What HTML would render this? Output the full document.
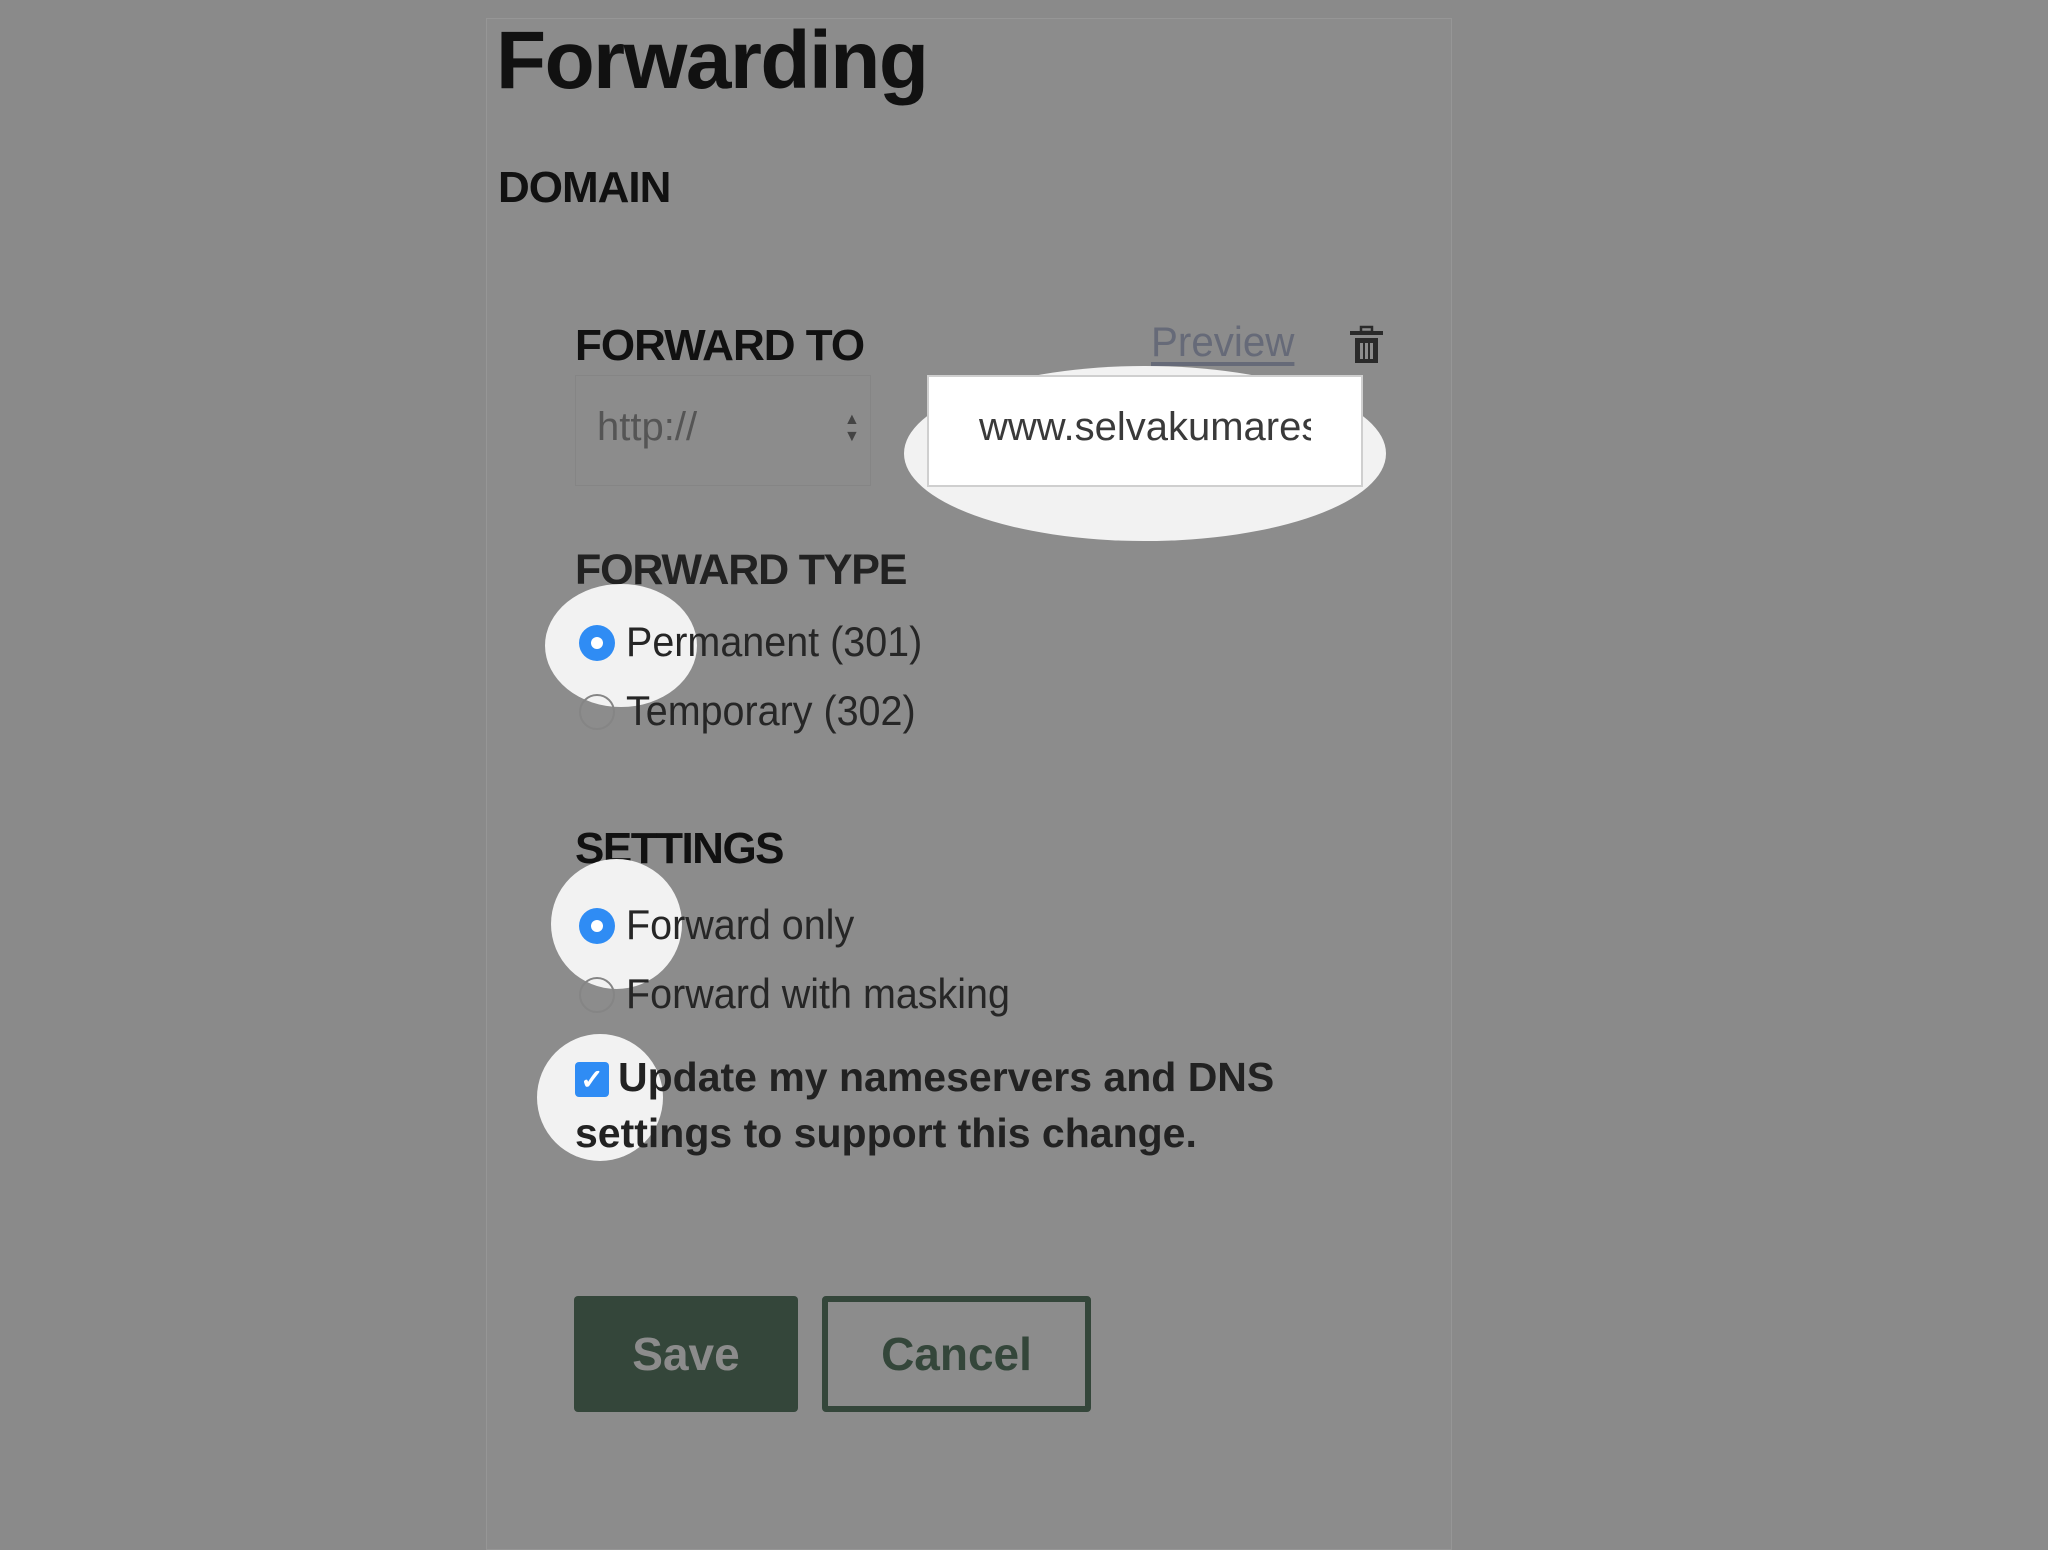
<!DOCTYPE html>
<html><head><meta charset="utf-8"><style>
html,body{margin:0;padding:0;width:2048px;height:1536px;background:#8a8a8a;overflow:hidden;font-family:"Liberation Sans",sans-serif}
.panel{position:absolute;left:486px;top:18px;width:964px;height:1530px;background:#8c8c8c;border:1px solid #969696;}
.a{position:absolute;white-space:nowrap}
.h{font-weight:bold;color:#111;}
.lbl{color:#262626;font-size:42px;transform:scaleX(0.94);transform-origin:left center}
.spot{position:absolute;background:#f2f2f2;border-radius:50%}
.radio{position:absolute;width:36px;height:36px;border-radius:50%;box-sizing:border-box}
.on{background:#2f8cf4}
.on::after{content:"";position:absolute;left:12px;top:12px;width:12px;height:12px;border-radius:50%;background:#fff}
.off{border:2px solid #858585}
</style></head><body>
<div class="panel"></div>
<div class="a h" style="left:496px;top:14px;font-size:82px;letter-spacing:-1.5px">Forwarding</div>
<div class="a h" style="left:498px;top:163px;font-size:44px;letter-spacing:-1px">DOMAIN</div>
<div class="a h" style="left:575px;top:321px;font-size:44px;letter-spacing:-1px">FORWARD TO</div>
<div class="a" style="left:1151px;top:318px;font-size:42px;color:#666a78;text-decoration:underline;text-underline-offset:6px;transform:scaleX(0.96);transform-origin:left">Preview</div>
<svg class="a" style="left:1345px;top:322px" width="42" height="46" viewBox="1345 322 42 46">
<rect x="1361" y="327" width="11" height="5" fill="none" stroke="#2a2a2a" stroke-width="2.5"/>
<rect x="1350" y="331" width="33" height="4" fill="#2a2a2a"/>
<rect x="1355" y="338" width="23" height="25" fill="#2a2a2a"/>
<rect x="1360" y="343" width="3" height="16" fill="#8c8c8c"/><rect x="1365" y="343" width="3" height="16" fill="#8c8c8c"/><rect x="1370" y="343" width="3" height="16" fill="#8c8c8c"/>
</svg>
<div class="a" style="left:575px;top:375px;width:296px;height:111px;border:1px solid #858585;box-sizing:border-box"></div>
<div class="a" style="left:597px;top:405px;font-size:40px;color:#555">http://</div>
<div class="a" style="left:844px;top:411px;font-size:16px;color:#444;line-height:17px">▲<br>▼</div>
<div class="spot" style="left:904px;top:366px;width:482px;height:175px"></div>
<div class="a" style="left:927px;top:375px;width:436px;height:112px;background:#fff;border:2px solid #cfcfcf;box-sizing:border-box;overflow:hidden"><div class="a" style="left:50px;top:28px;width:332px;overflow:hidden;font-size:40px;color:#3a3a3a">www.selvakumaresan.com</div></div>
<div class="a h" style="left:575px;top:546px;font-size:43px;letter-spacing:-1.2px;color:#222">FORWARD TYPE</div>
<div class="spot" style="left:545px;top:584px;width:152px;height:123px"></div>
<div class="radio on" style="left:579px;top:625px"></div>
<div class="a lbl" style="left:626px;top:618px">Permanent (301)</div>
<div class="radio off" style="left:579px;top:694px"></div>
<div class="a lbl" style="left:626px;top:687px">Temporary (302)</div>
<div class="a h" style="left:575px;top:824px;font-size:44px;letter-spacing:-1.5px">SETTINGS</div>
<div class="spot" style="left:551px;top:859px;width:131px;height:130px"></div>
<div class="radio on" style="left:579px;top:908px"></div>
<div class="a lbl" style="left:626px;top:901px">Forward only</div>
<div class="radio off" style="left:579px;top:977px"></div>
<div class="a lbl" style="left:626px;top:970px">Forward with masking</div>
<div class="spot" style="left:537px;top:1034px;width:126px;height:127px"></div>
<div class="a" style="left:575px;top:1062px;width:34px;height:35px;background:#2f8cf4;border-radius:4px;color:#fff;font-size:28px;text-align:center;line-height:35px;font-weight:bold">✓</div>
<div class="a" style="left:618px;top:1054px;font-size:41px;font-weight:bold;color:#222;letter-spacing:0px">Update my nameservers and DNS</div>
<div class="a" style="left:575px;top:1110px;font-size:41px;font-weight:bold;color:#222;letter-spacing:0px">settings to support this change.</div>
<div class="a" style="left:574px;top:1296px;width:224px;height:116px;background:#34463a;border-radius:4px;color:#8c8c8c;font-weight:bold;font-size:46px;text-align:center;line-height:116px">Save</div>
<div class="a" style="left:822px;top:1296px;width:269px;height:116px;border:6px solid #34463a;border-radius:4px;box-sizing:border-box;color:#34463a;font-weight:bold;font-size:46px;text-align:center;line-height:104px">Cancel</div>
</body></html>
